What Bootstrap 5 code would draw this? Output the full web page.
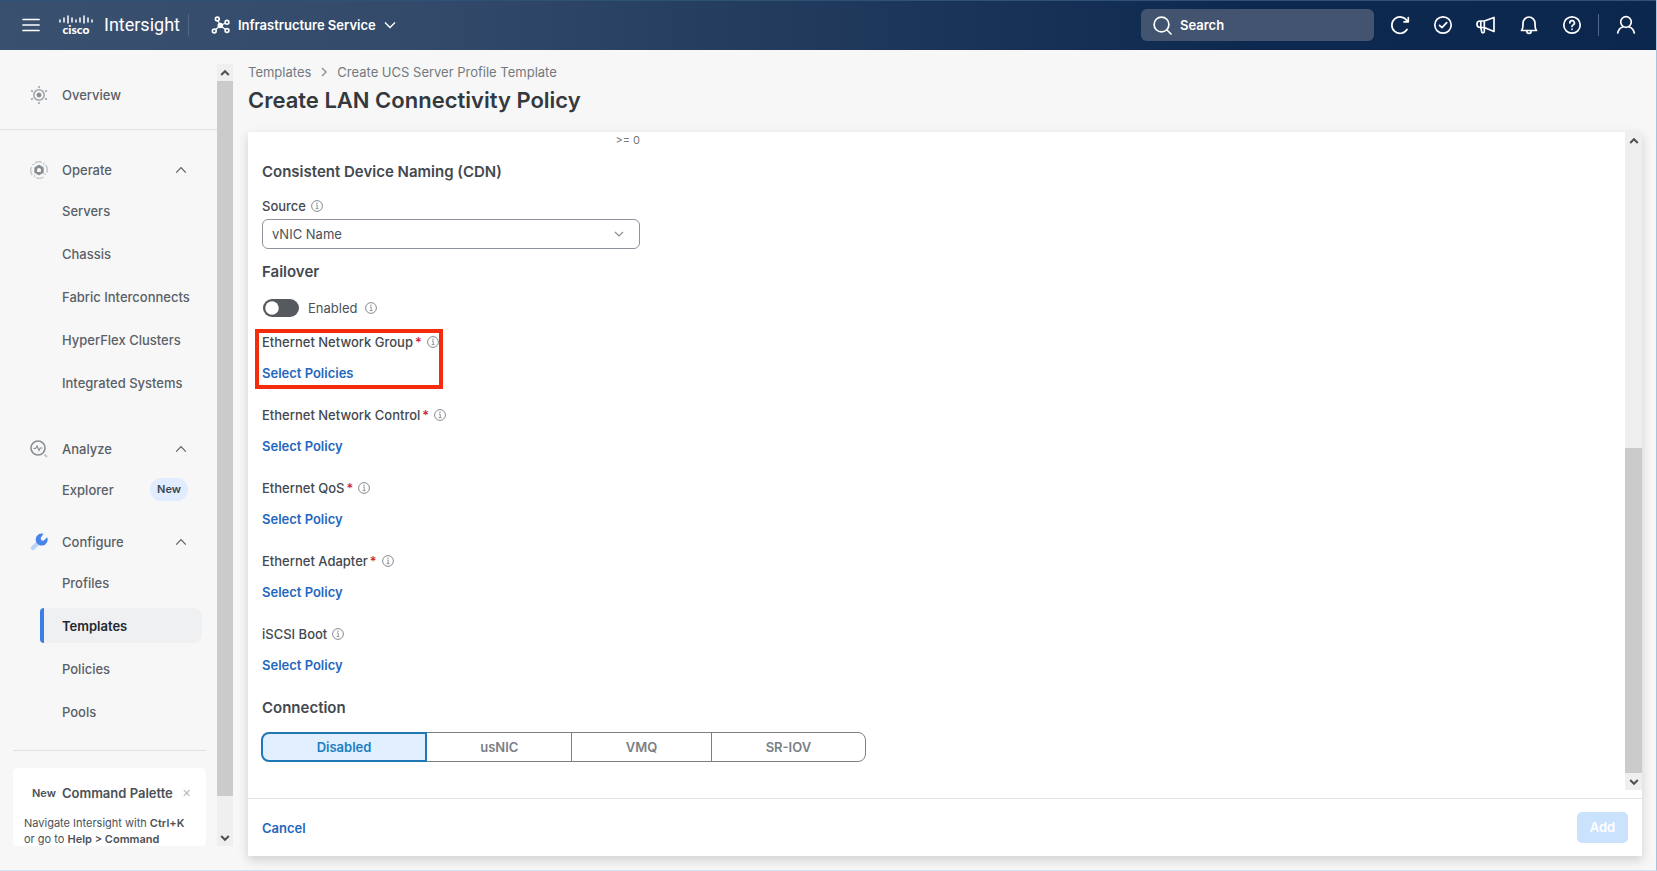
<!DOCTYPE html>
<html lang="en">
<head>
<meta charset="utf-8">
<meta name="viewport" content="width=device-width, initial-scale=1">
<title>Create LAN Connectivity Policy</title>
<link href="https://cdn.jsdelivr.net/npm/bootstrap@5.3.0/dist/css/bootstrap.min.css" rel="stylesheet">
<style>
  body { font-family: Inter, "Liberation Sans", sans-serif; font-size: 13px; line-height: 20px; color: #4b5157; background: #f7f7f7; }
  a { text-decoration: none; }
  svg { display: block; flex: none; }
  .line-icon { fill: none; stroke: currentColor; stroke-width: 1.7; stroke-linecap: round; stroke-linejoin: round; }
  .app-shell { border-right: 1px solid #a5c4de; border-bottom: 1px solid #cfe5f5; }

  .top-bar { height: 50px; padding: 0 9px 1px 22px; color: #fff; border-top: 1px solid #2f5176;
    background: linear-gradient(90deg, #39506f 0, #334a6b 25%, #1c3659 55%, #0e294f 75%, #0b274e 100%); }
  .top-bar button { color: inherit; background: none; border: 0; padding: 0; }
  .product-name { font-family: Roboto, sans-serif; font-size: 18px; }
  .service-menu { font-weight: 600; }
  .bar-divider { width: 1px; height: 22px; background: #50678a; }
  .product-divider { margin: 0 22px 0 8px; }
  .account-divider { margin: 0 5px; }
  .search-box { width: 233px; height: 32px; padding-left: 12px; gap: 8px; border-radius: 6px; background: #42546f; }
  .search-box input { background: none; border: 0; outline: 0; color: #fff; font-weight: 600; padding: 0; min-width: 0; }
  .search-box input::placeholder { color: #fff; opacity: 1; }
  .top-bar .tool-btn { width: 43px; height: 32px; }

  .side-pane { width: 233px; margin: 14px 0 24px; }
  .side-nav { font-weight: 500; white-space: nowrap; }
  .side-nav a, .group-head { color: #5a6067; }
  .side-link { height: 43px; padding-left: 62px; padding-right: 29px; }
  .group-head { height: 39px; padding: 0 30px; width: 100%; background: none; border: 0; font-weight: 500; }
  .overview-head { margin: 11px 0 15px; }
  .operate-head { margin-top: 20px; }
  .analyze-head { margin-top: 25px; }
  .configure-head { margin-top: 11px; }
  .side-nav .side-link.current { height: 35px; margin: 4px 15px 4px 40px; padding-left: 18px; color: #23282e; font-weight: 600;
    background: #eff0f2; border-left: 4px solid #3b7de9; border-radius: 4px 8px 8px 4px; }
  .new-pill { background: #e1edff; color: #3c4650; font-size: 11px; font-weight: 600; line-height: 23px; border-radius: 12px; padding: 0 7px; }
  .group-icon { width: 18px; margin-right: 14px; }
  .side-rule { border-top: 1px solid #e0e1e2; }
  .tip-rule { margin: 17px 11px 0 13px; }
  .tip-card { margin: 17px 11px 0 13px; padding: 15px 11px 0; background: #fff; border-radius: 5px; font-size: 11px; line-height: 16px; font-weight: 400; }
  .tip-title { font-size: 13px; font-weight: 600; line-height: 20px; margin-left: 6px; }
  .tip-card button { border: 0; background: none; color: #b6babe; padding: 0; }

  .scroll-rail { width: 16px; background: #efefef; }
  .scroll-thumb { background: #cbcbcb; }
  .rail-arrow { height: 17px; color: #505050; }

  .main-pane { padding: 12px 14px 14px 15px; }
  .crumbs { gap: 10px; }
  .crumbs a { color: #74797f; }
  .page-title { font-size: 22px; line-height: 32px; font-weight: 600; color: #34393e; margin: 2px 0 16px; }
  .form-panel { background: #fff; box-shadow: 0 4px 10px rgba(0,0,0,.16); }
  .form-panel .scroll-rail { width: 17px; }
  .form-area { padding: 0 14px; }
  .source-col { width: 378px; max-width: 100%; }
  .range-hint { font-size: 11px; line-height: 16px; color: #74797f; }
  .part-title { font-size: 15px; line-height: 20px; font-weight: 600; color: #43494f; margin: 14px 0; }
  .failover-title { margin: 13px 0 0; }
  .connection-title { margin-top: 23px; }
  .field-name { font-weight: 500; color: #43494f; gap: 5px; }
  .need { color: #cf2030; margin-left: 2px; }
  .source-col .form-select { height: 30px; margin-top: 3px; padding: 0 30px 0 9px; font-size: 13px; line-height: 20px; color: #4b5157; border-color: #8d939b; border-radius: 6px;
    background-size: 10px 10px; background-position: right 15px center;
    background-image: url("data:image/svg+xml,%3csvg xmlns='http://www.w3.org/2000/svg' viewBox='0 0 10 10'%3e%3cpath fill='none' stroke='%23878d94' stroke-width='1.2' d='M1 3l4 4 4-4'/%3e%3c/svg%3e"); }
  .toggle-row { margin: 16px 0 14px; }
  .toggle-row .form-check-input { width: 36px; height: 18px; margin: 0 9px 0 1px; float: none; border: 0; background-color: #56595e;
    background-image: url("data:image/svg+xml,%3csvg xmlns='http://www.w3.org/2000/svg' viewBox='-4 -4 8 8'%3e%3ccircle r='3' fill='%23fff'/%3e%3c/svg%3e"); }
  .policy-field { margin-bottom: 22px; }
  .action-link { color: #1f67c0; font-weight: 600; }
  .policy-field .action-link { display: block; margin-top: 11px; }
  .callout-field { width: 174px; }
  .callout-field::after { content: ""; position: absolute; inset: -3px -7px -6px; border: 4px solid #f42c0c; pointer-events: none; }
  .mode-group { width: 605px; max-width: 100%; height: 30px; margin-left: -1px; }
  .mode-group .btn { font-size: 13px; line-height: 20px; font-weight: 600; padding: 4px 0; color: #7a8086; border: 1px solid #7a8086; border-radius: 8px; }
  .mode-group .btn-check:checked + .btn { color: #1a7ec2; background: #e1effe; border: 2px solid #1f78b4; padding: 3px 0; }
  .form-foot { height: 58px; padding: 0 14px; border-top: 1px solid #e1e2e3; }
  .add-btn, .add-btn:disabled { width: 51px; height: 31px; padding: 0; font-size: 13px; font-weight: 600; color: #fff; background: #cbe2fd; border: 0; border-radius: 5px; opacity: 1; }
</style>
</head>
<body>
<svg width="0" height="0" class="position-absolute" aria-hidden="true">
  <symbol id="info" viewBox="0 0 12 12"><circle cx="6" cy="6" r="5.4" fill="none" stroke="#858b92"/><path d="M5 5h1.2v3.6M4.7 8.6h2.8" fill="none" stroke="#858b92" stroke-width=".9"/><circle cx="6" cy="3.2" r=".7" fill="#858b92"/></symbol>
  <symbol id="up" viewBox="0 0 12 8"><path d="M1.2 6.6L6 1.6l4.8 5" fill="none" stroke="currentColor" stroke-width="1.2"/></symbol>
  <symbol id="rail-up" viewBox="0 0 10 8"><path d="M1.2 6L5 2.2 8.8 6" fill="none" stroke="currentColor" stroke-width="2"/></symbol>
  <symbol id="rail-down" viewBox="0 0 10 8"><path d="M1.2 2L5 5.8 8.8 2" fill="none" stroke="currentColor" stroke-width="2"/></symbol>
</svg>

<div class="app-shell vh-100 d-flex flex-column overflow-hidden">
  <header class="top-bar d-flex align-items-center flex-shrink-0">
    <button type="button" aria-label="Menu"><svg class="line-icon" width="18" height="14" viewBox="0 0 18 14"><path d="M1 1.5h16M1 7h16M1 12.5h16"/></svg></button>
    <svg class="ms-3 me-2" width="40" height="22" viewBox="0 0 40 22" aria-label="Cisco">
      <path d="M4 6v2M8 4v4M12 2v7M16 4v4M20 6v2M24 4v4M28 2v7M32 4v4M36 6v2" stroke="#fff" stroke-width="1.5" stroke-linecap="round"/>
      <text x="20" y="20" text-anchor="middle" fill="#fff" font-family="Lato, sans-serif" font-weight="900" font-size="12">cisco</text>
    </svg>
    <span class="product-name">Intersight</span>
    <span class="bar-divider product-divider"></span>
    <button type="button" class="service-menu d-flex align-items-center gap-2">
      <svg width="19" height="18" viewBox="0 0 19 18" fill="none" stroke="#fff" stroke-width="1.6"><path d="M9.3 9.500L7.200 5M9.300 9.500l5-2.300M9.300 9.500l5 3.700M9.300 9.500l-4.500 4" stroke-width="1.200"/><circle cx="9.300" cy="9.500" r="2" fill="#fff"/><circle cx="6.300" cy="3" r="1.900"/><circle cx="16" cy="6.300" r="1.900"/><circle cx="16" cy="14.500" r="1.900"/><circle cx="3.300" cy="15" r="1.900"/></svg>
      <span>Infrastructure Service</span>
      <svg width="12" height="8" viewBox="0 0 12 8" fill="none" stroke="#fff" stroke-width="1.4"><path d="M1 1.500l5 5 5-5"/></svg>
    </button>
    <label class="search-box d-flex align-items-center ms-auto me-1">
      <svg class="line-icon" width="19" height="19" viewBox="0 0 19 19"><circle cx="8.500" cy="8.500" r="7.400"/><path d="M14 14l4 4"/></svg>
      <input type="search" placeholder="Search" aria-label="Search">
    </label>
    <button type="button" class="tool-btn d-grid align-items-center justify-content-center" aria-label="Refresh"><svg class="line-icon" width="20" height="20" viewBox="0 0 20 20"><path d="M17 14.500A8.200 8.200 0 1 1 17 5.800M18.300 2.500v4.300h-4.300"/></svg></button>
    <button type="button" class="tool-btn d-grid align-items-center justify-content-center" aria-label="Tasks"><svg class="line-icon" width="20" height="20" viewBox="0 0 20 20"><circle cx="10" cy="10" r="8.200"/><path d="M6.500 10.300L9 12.700l4.700-5"/></svg></button>
    <button type="button" class="tool-btn d-grid align-items-center justify-content-center" aria-label="Announcements"><svg class="line-icon" width="20" height="20" viewBox="0 0 20 20"><path d="M8.300 6L18 2.500v14L8.300 12.500zM8.300 6H4.200a3.200 3.200 0 0 0 0 6.500h4.100M4.800 12.500l1 4.500c.3 1.200 2.500 1 2.500-.5v-4M4.800 6v6.500"/></svg></button>
    <button type="button" class="tool-btn d-grid align-items-center justify-content-center" aria-label="Notifications"><svg class="line-icon" width="20" height="20" viewBox="0 0 20 20"><path d="M2.500 15.500h15c-1.500-1.500-1.500-3-1.500-7a6 6.500 0 0 0-12 0c0 4 0 5.500-1.500 7zM7.800 16c0 3.200 4.400 3.200 4.400 0"/></svg></button>
    <button type="button" class="tool-btn d-grid align-items-center justify-content-center" aria-label="Help"><svg class="line-icon" width="20" height="20" viewBox="0 0 20 20"><circle cx="10" cy="10" r="8.200"/><path d="M7.800 8a2.300 2.300 0 1 1 3.300 2c-.8.4-1.100.7-1.100 1.500M10 14.200v.1"/></svg></button>
    <span class="bar-divider account-divider"></span>
    <button type="button" class="tool-btn d-grid align-items-center justify-content-center" aria-label="Account"><svg class="line-icon" width="20" height="20" viewBox="0 0 20 20"><circle cx="10" cy="7" r="5.300"/><path d="M1.700 18c.6-3.200 2.800-5.300 5.600-6.200M18.300 18c-.6-3.200-2.800-5.300-5.600-6.200"/></svg></button>
  </header>

  <div class="d-flex flex-grow-1 overflow-hidden">
    <aside class="side-pane d-flex flex-shrink-0">
      <nav class="side-nav flex-grow-1 overflow-hidden">
        <a href="#" class="group-head overview-head d-flex align-items-center">
          <span class="group-icon"><svg width="18" height="18" viewBox="0 0 18 18" fill="none" stroke="#a2a8ae"><circle cx="9" cy="9" r="5.200" stroke-width="1.600"/><circle cx="9" cy="9" r="2" fill="#858c93" stroke="#858c93"/><path d="M9 0v2M9 16v2M1 4.500l2 1M15 12.500l2 1M17 4.500l-2 1M3 12.500l-2 1" stroke-width="1.600"/></svg></span>Overview
        </a>
        <div class="side-rule"></div>
        <button type="button" class="group-head operate-head d-flex align-items-center">
          <span class="group-icon"><svg width="18" height="18" viewBox="0 0 18 18" fill="none"><path d="M9 5.200l3.300 1.900v3.800L9 12.800l-3.300-1.900V7.100z" stroke="#858c93" stroke-width="2.800" stroke-linejoin="round"/><path d="M5 1.800A8.200 8.200 0 0 1 12 1.300M15.500 3.800a8.200 8.200 0 0 1 1.300 7.700M13.500 16a8.200 8.200 0 0 1-7.500.7M2.200 14A8.200 8.200 0 0 1 1.500 6" stroke="#c2c6ca" stroke-width="1.400"/><path d="M2 4l3-1M14 1.500l-.5 3M16 13.500l-3-1M4 16.500l1-3" stroke="#c2c6ca"/></svg></span>Operate
          <svg class="ms-auto" width="12" height="8"><use href="#up"/></svg>
        </button>
        <a href="#" class="side-link d-flex align-items-center">Servers</a>
        <a href="#" class="side-link d-flex align-items-center">Chassis</a>
        <a href="#" class="side-link d-flex align-items-center">Fabric Interconnects</a>
        <a href="#" class="side-link d-flex align-items-center">HyperFlex Clusters</a>
        <a href="#" class="side-link d-flex align-items-center">Integrated Systems</a>
        <button type="button" class="group-head analyze-head d-flex align-items-center">
          <span class="group-icon"><svg width="18" height="18" viewBox="0 0 18 18" fill="none" stroke="#858c93"><circle cx="8" cy="8" r="7" stroke-width="1.600"/><path d="M3.500 8.500h2L7 6l2 4.500 1.200-2.500h2.300" stroke-width="1.100"/><path d="M14.500 14.500l2.500 2.500" stroke="#c2c6ca" stroke-width="2"/></svg></span>Analyze
          <svg class="ms-auto" width="12" height="8"><use href="#up"/></svg>
        </button>
        <a href="#" class="side-link d-flex align-items-center justify-content-between">Explorer <span class="new-pill">New</span></a>
        <button type="button" class="group-head configure-head d-flex align-items-center">
          <span class="group-icon"><svg width="18" height="18" viewBox="0 0 18 18"><path d="M7 11L3 15" stroke="#bcd4f7" stroke-width="4.500" stroke-linecap="round"/><path d="M13.500.8a6 6 0 1 0 3.700 3.400l-3.700 3.500-2.300-.5-.6-2.300z" fill="#4684ea"/></svg></span>Configure
          <svg class="ms-auto" width="12" height="8"><use href="#up"/></svg>
        </button>
        <a href="#" class="side-link d-flex align-items-center">Profiles</a>
        <a href="#" class="side-link current d-flex align-items-center" aria-current="page">Templates</a>
        <a href="#" class="side-link d-flex align-items-center">Policies</a>
        <a href="#" class="side-link d-flex align-items-center">Pools</a>
        <div class="side-rule tip-rule"></div>
        <section class="tip-card">
          <div class="d-flex align-items-center mb-2 pb-1"><strong class="fw-semibold ms-2">New</strong><span class="tip-title">Command Palette</span><button type="button" class="ms-auto me-1" aria-label="Dismiss">✕</button></div>
          <div>Navigate Intersight with <strong class="fw-semibold">Ctrl+K</strong><br>or go to <strong class="fw-semibold">Help &gt; Command</strong></div>
        </section>
      </nav>
      <div class="scroll-rail d-flex flex-column flex-shrink-0" aria-hidden="true">
        <div class="rail-arrow d-grid align-items-center justify-content-center"><svg width="10" height="8"><use href="#rail-up"/></svg></div>
        <div class="scroll-thumb" style="flex:715"></div><div style="flex:33"></div>
        <div class="rail-arrow d-grid align-items-center justify-content-center"><svg width="10" height="8"><use href="#rail-down"/></svg></div>
      </div>
    </aside>

    <main class="main-pane flex-grow-1 d-flex flex-column">
      <nav class="crumbs d-flex align-items-center" aria-label="Breadcrumb">
        <a href="#">Templates</a>
        <svg width="6" height="10" viewBox="0 0 6 10" fill="none" stroke="#8a9096" stroke-width="1.4"><path d="M1 1l4 4-4 4"/></svg>
        <a href="#">Create UCS Server Profile Template</a>
      </nav>
      <h1 class="page-title">Create LAN Connectivity Policy</h1>
      <form class="form-panel flex-grow-1 d-flex flex-column">
        <div class="d-flex flex-grow-1 pb-2">
          <div class="form-area flex-grow-1">
            <div class="source-col range-hint text-end">&gt;= 0</div>
            <h2 class="part-title">Consistent Device Naming (CDN)</h2>
            <div class="source-col">
              <label class="field-name d-flex align-items-center" for="source">Source <svg width="12" height="12"><use href="#info"/></svg></label>
              <select class="form-select" id="source"><option>vNIC Name</option></select>
            </div>
            <h2 class="part-title failover-title">Failover</h2>
            <div class="toggle-row d-flex align-items-center form-switch p-0">
              <input class="form-check-input" type="checkbox" role="switch" id="failover">
              <label for="failover" class="me-2">Enabled</label><svg width="12" height="12"><use href="#info"/></svg>
            </div>
            <div class="policy-field callout-field position-relative">
              <div class="field-name d-flex align-items-center text-nowrap"><span>Ethernet Network Group<span class="need">*</span></span><svg width="12" height="12"><use href="#info"/></svg></div>
              <a href="#" class="action-link">Select Policies</a>
            </div>
            <div class="policy-field">
              <div class="field-name d-flex align-items-center"><span>Ethernet Network Control<span class="need">*</span></span><svg width="12" height="12"><use href="#info"/></svg></div>
              <a href="#" class="action-link">Select Policy</a>
            </div>
            <div class="policy-field">
              <div class="field-name d-flex align-items-center"><span>Ethernet QoS<span class="need">*</span></span><svg width="12" height="12"><use href="#info"/></svg></div>
              <a href="#" class="action-link">Select Policy</a>
            </div>
            <div class="policy-field">
              <div class="field-name d-flex align-items-center"><span>Ethernet Adapter<span class="need">*</span></span><svg width="12" height="12"><use href="#info"/></svg></div>
              <a href="#" class="action-link">Select Policy</a>
            </div>
            <div class="policy-field">
              <div class="field-name d-flex align-items-center">iSCSI Boot<svg width="12" height="12"><use href="#info"/></svg></div>
              <a href="#" class="action-link">Select Policy</a>
            </div>
            <h2 class="part-title connection-title">Connection</h2>
            <div class="mode-group btn-group" role="group" aria-label="Connection">
              <input type="radio" class="btn-check" name="mode" id="m1" checked><label class="btn" for="m1" style="flex:164">Disabled</label>
              <input type="radio" class="btn-check" name="mode" id="m2"><label class="btn" for="m2" style="flex:146">usNIC</label>
              <input type="radio" class="btn-check" name="mode" id="m3"><label class="btn" for="m3" style="flex:140">VMQ</label>
              <input type="radio" class="btn-check" name="mode" id="m4"><label class="btn" for="m4" style="flex:155">SR-IOV</label>
            </div>
          </div>
          <div class="scroll-rail d-flex flex-column flex-shrink-0" aria-hidden="true">
            <div class="rail-arrow d-grid align-items-center justify-content-center"><svg width="10" height="8"><use href="#rail-up"/></svg></div>
            <div style="flex:299"></div><div class="scroll-thumb" style="flex:325"></div>
            <div class="rail-arrow d-grid align-items-center justify-content-center"><svg width="10" height="8"><use href="#rail-down"/></svg></div>
          </div>
        </div>
        <div class="form-foot d-flex align-items-center justify-content-between flex-shrink-0">
          <a href="#" class="action-link">Cancel</a>
          <button type="submit" class="btn add-btn" disabled>Add</button>
        </div>
      </form>
    </main>
  </div>
</div>
<script src="https://cdn.jsdelivr.net/npm/bootstrap@5.3.0/dist/js/bootstrap.bundle.min.js"></script>
</body>
</html>
